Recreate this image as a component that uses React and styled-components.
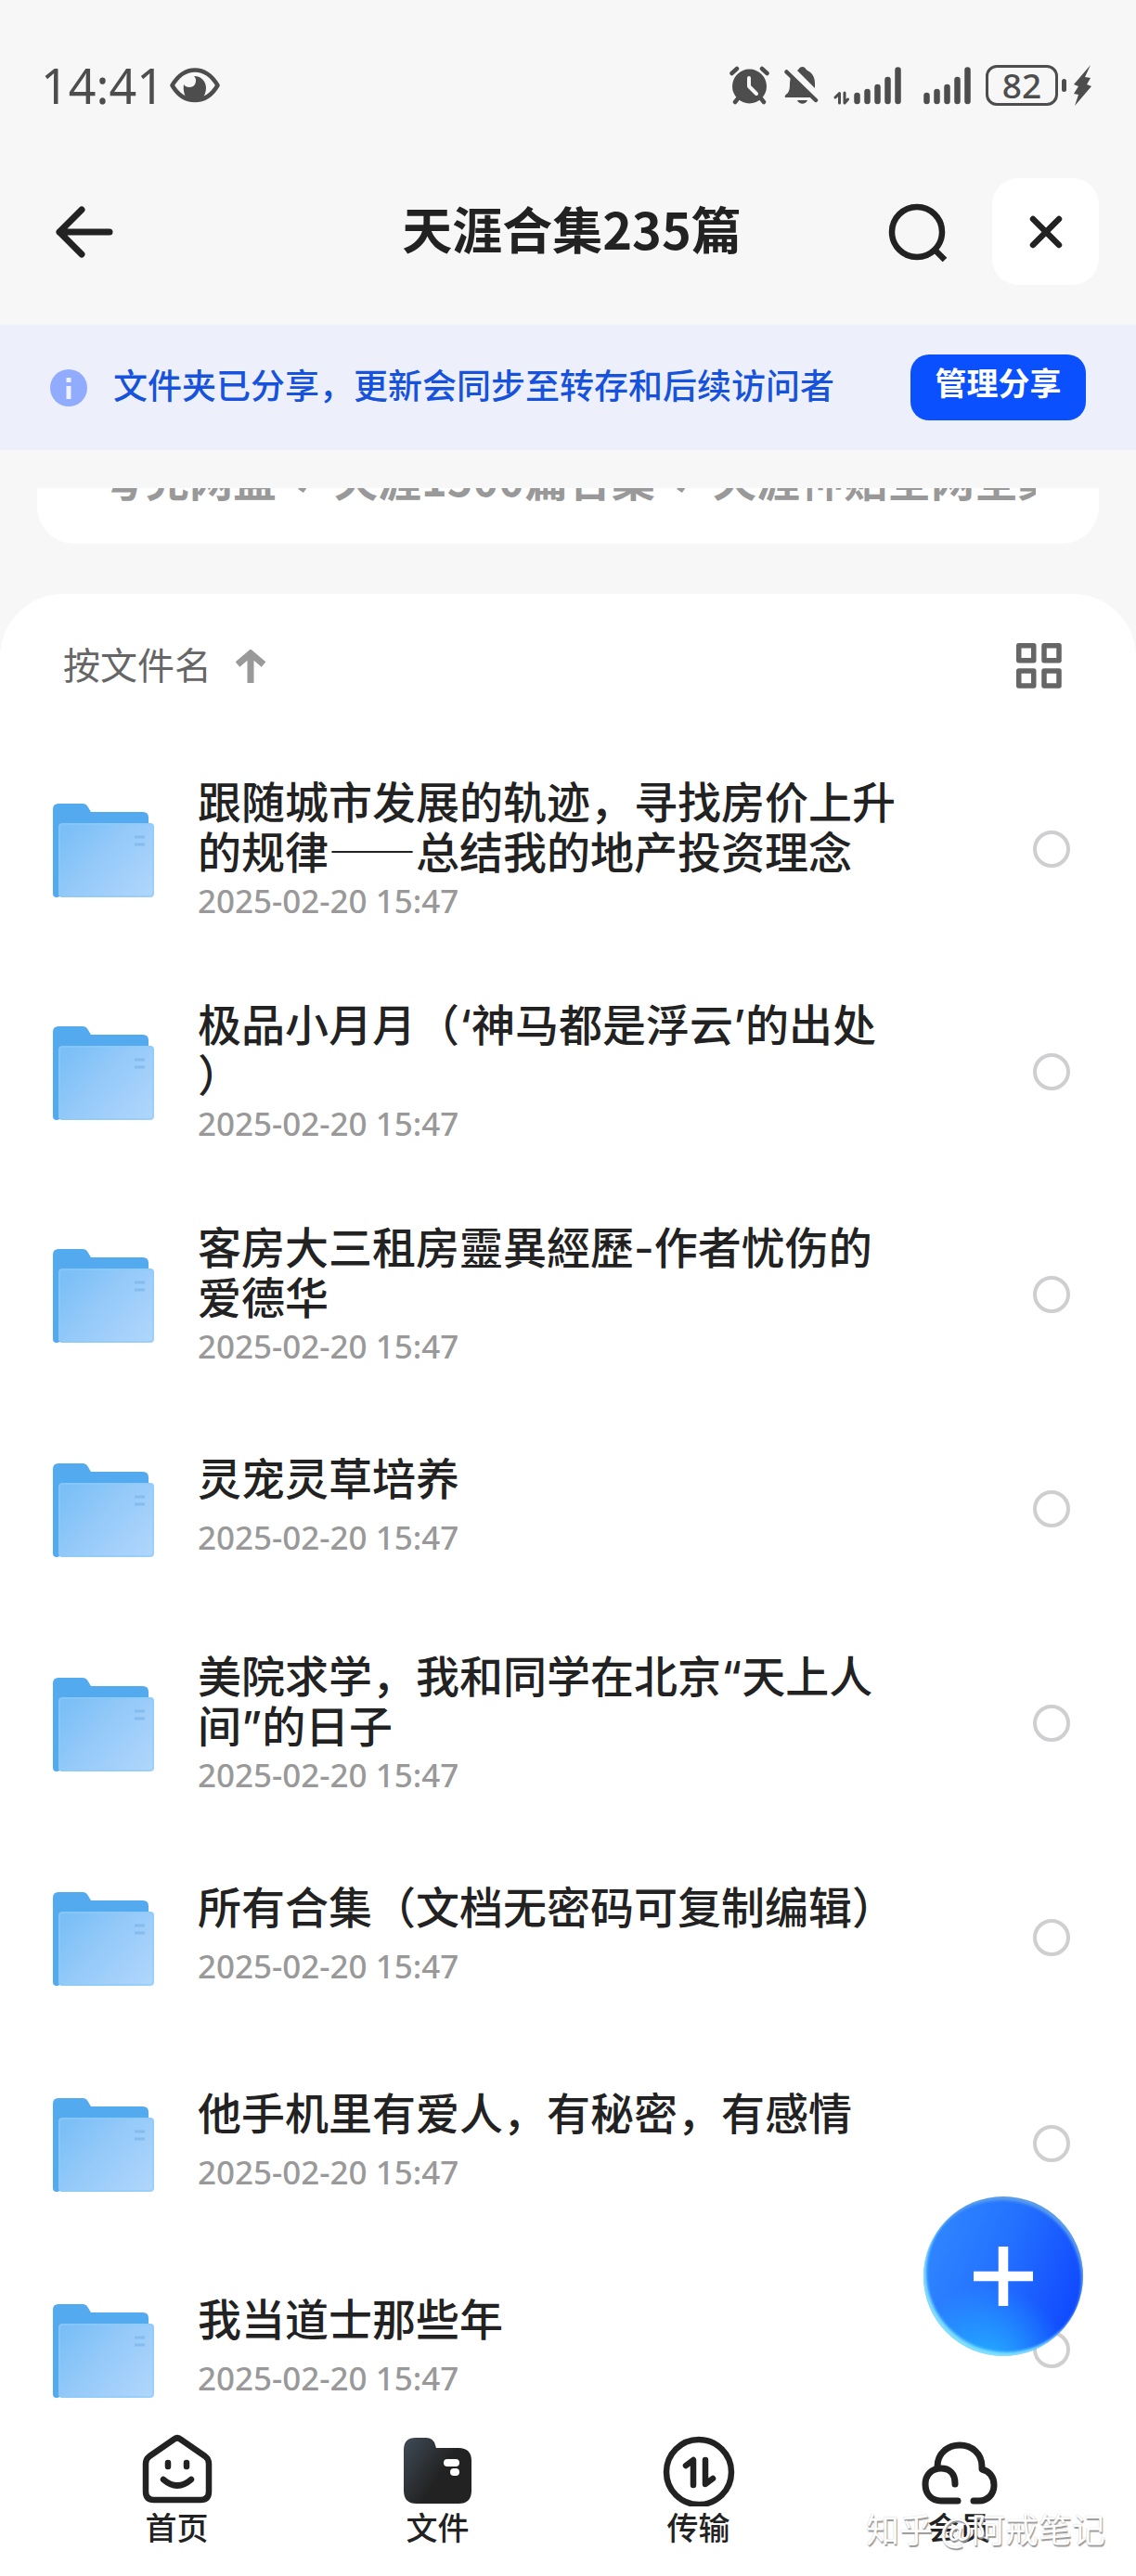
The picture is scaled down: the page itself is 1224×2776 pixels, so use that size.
import { useState } from 'react'
import styled, { createGlobalStyle } from 'styled-components';

const files = [
    { name: '跟随城市发展的轨迹，寻找房价上升的规律——总结我的地产投资理念', long: true },
    { name: '极品小月月（‘神马都是浮云’的出处）', long: true },
    { name: '客房大三租房靈異經歷-作者忧伤的爱德华', long: true },
    { name: '灵宠灵草培养' },
    { name: '美院求学，我和同学在北京“天上人间”的日子', long: true },
    { name: '所有合集（文档无密码可复制编辑）' },
    { name: '他手机里有爱人，有秘密，有感情' },
    { name: '我当道士那些年' },
]

const EyeIcon = () => (
    <svg width="54" height="38" viewBox="0 0 54 38" aria-hidden="true">
        <path d="M2.500 19C9 8 17 2.500 27 2.500S45 8 51.500 19C45 30 37 35 27 35S9 30 2.500 19Z" fill="none" stroke="#4d4d4d" strokeWidth="4.500" strokeLinejoin="round" />
        <path d="M26 9A12.500 13 0 0 1 39 21C39 27 37 30 35 34H19C16 31 14 24 15 18C17 22 25 22 27 18C29 14 28 11 26 9Z" fill="#4d4d4d" />
    </svg>
)

const AlarmIcon = () => (
    <svg width="43" height="42" viewBox="0 0 43 42" aria-hidden="true">
        <g stroke="#4d4d4d" strokeWidth="4.500" strokeLinecap="round">
            <path d="M2.500 8L8 3M40.500 8L35 3M10 34L6 39M33 34L37 39" />
        </g>
        <circle cx="21.500" cy="22" r="18.500" fill="#4d4d4d" />
        <path d="M21 13V22L29 30" fill="none" stroke="#f7f7f7" strokeWidth="4" strokeLinecap="round" strokeLinejoin="round" />
    </svg>
)

const BellOffIcon = () => (
    <svg width="37" height="42" viewBox="0 0 37 42" aria-hidden="true">
        <path d="M14 5C16 4 16 1 19.500 1S23 4 25 5C31 8 33 13 33 19V24Z" fill="#4d4d4d" />
        <path d="M7 11L29 34H1C0 32 2 31 4 29C6 26 6 22 6 18Z" fill="#4d4d4d" />
        <path d="M14 37H25C23 42 16 42 14 37Z" fill="#4d4d4d" />
        <path d="M2.500 6.500L34 37" stroke="#4d4d4d" strokeWidth="4.500" strokeLinecap="round" />
    </svg>
)

const SignalIcon = ({ data }) => (
    <svg width={data ? 73 : 51} height="42" viewBox={data ? '-22 0 73 42' : '0 0 51 42'} aria-hidden="true">
        {data && (
            <path d="M-20 34L-15.500 29.500V40M-10 29V40L-6.500 36" fill="none" stroke="#4d4d4d" strokeWidth="3" strokeLinejoin="round" strokeLinecap="round" />
        )}
        <path d="M3.500 32V38M14.500 28V38M25.500 23V38M36.500 15V38M47.500 4.500V38" stroke="#4d4d4d" strokeWidth="6.500" strokeLinecap="round" />
    </svg>
)

const BoltIcon = () => (
    <svg width="23" height="44" viewBox="0 0 23 44" aria-hidden="true">
        <path d="M20 0L2 21L7 23L2 31L7 32L3 44L21 23L16 21L20 14L14 13Z" fill="#4d4d4d" />
    </svg>
)

const BackIcon = () => (
    <svg width="84" height="64" viewBox="0 0 84 64" aria-hidden="true">
        <path d="M40 8L16 32L40 56M16 32H70" fill="none" stroke="#222" strokeWidth="7" strokeLinecap="round" strokeLinejoin="round" />
    </svg>
)

const SearchIcon = () => (
    <svg width="64" height="64" viewBox="0 0 64 64" aria-hidden="true">
        <circle cx="31" cy="32" r="27" fill="none" stroke="#222" strokeWidth="6.500" />
        <path d="M50 51L61 62" stroke="#222" strokeWidth="6.500" />
    </svg>
)

const CloseIcon = () => (
    <svg width="36" height="36" viewBox="0 0 36 36" aria-hidden="true">
        <path d="M4 4L32 32M32 4L4 32" stroke="#222" strokeWidth="6.500" strokeLinecap="round" />
    </svg>
)

const InfoIcon = () => (
    <svg width="40" height="40" viewBox="0 0 40 40" aria-hidden="true">
        <circle cx="20" cy="20" r="20" fill="#91abff" />
        <path d="M17.500 9H22.500V14H17.500ZM17.500 18H22.500V32H17.500Z" fill="#eff2fd" />
    </svg>
)

const CrumbArrow = () => (
    <svg width="18" height="40" viewBox="0 0 18 40" aria-hidden="true">
        <path d="M4 6L14 20L4 34" fill="none" stroke="#999" strokeWidth="7" />
    </svg>
)

const SortArrow = () => (
    <svg width="34" height="36" viewBox="0 0 34 36" aria-hidden="true">
        <path d="M3 16L17 4L31 16M17 4V36" fill="none" stroke="#999" strokeWidth="7" />
    </svg>
)

const GridIcon = () => (
    <svg width="49" height="49" viewBox="0 0 49 49" aria-hidden="true">
        <g fill="none" stroke="#666" strokeWidth="5.500" strokeLinejoin="round">
            <rect x="2.750" y="2.750" width="16" height="16" />
            <rect x="30" y="2.750" width="16" height="16" />
            <rect x="2.750" y="30" width="16" height="16" />
            <rect x="30" y="30" width="16" height="16" />
        </g>
    </svg>
)

const FolderIcon = () => (
    <svg width="110" height="106" viewBox="0 -4 110 106" aria-hidden="true">
        <defs>
            <linearGradient id="folderFront" x1="0" y1="0.200" x2="1" y2="0.900">
                <stop offset="0" stopColor="#7bbff6" />
                <stop offset="0.450" stopColor="#96caf9" />
                <stop offset="1" stopColor="#afd6fc" />
            </linearGradient>
        </defs>
        <path d="M0 6Q0 0 6 0H32Q36 0 38 4L41 9H97Q103 9 103 15V60H8V97Q8 101 4 101Q0 101 0 97Z" fill="#54aaee" />
        <rect x="6" y="21" width="103" height="80" rx="4" fill="url(#folderFront)" />
        <rect x="7" y="22" width="101" height="78" rx="4" fill="none" stroke="#8ccbf8" strokeWidth="2" opacity="0.600" />
        <path d="M88 36H99M88 44H99" stroke="#86bbee" strokeWidth="3" />
    </svg>
)

const HomeIcon = () => (
    <svg width="78" height="78" viewBox="0 0 78 78" aria-hidden="true">
        <path d="M35 6Q39 2.500 43 6L69 24Q73 27 73 32V62Q73 71 64 71H14Q5 71 5 62V32Q5 27 9 24Z" fill="none" stroke="#222" strokeWidth="6.500" strokeLinejoin="round" />
        <path d="M29 31V35M49 31V35" stroke="#222" strokeWidth="6.500" strokeLinecap="round" />
        <path d="M24 49Q39 62 54 49" fill="none" stroke="#222" strokeWidth="6.500" strokeLinecap="round" />
    </svg>
)

const FilesIcon = () => (
    <svg width="78" height="78" viewBox="0 0 78 78" aria-hidden="true">
        <defs>
            <linearGradient id="filesFill" x1="0" y1="0.200" x2="0.550" y2="0.550">
                <stop offset="0" stopColor="#3b4650" />
                <stop offset="1" stopColor="#222" />
            </linearGradient>
        </defs>
        <path d="M2 17Q2 4 15 4H26Q34 4 36 12L37 15H61Q75 15 75 29V61Q75 75 61 75H16Q2 75 2 61Z" fill="url(#filesFill)" />
        <rect x="45" y="27" width="17" height="8" rx="4" fill="#fff" />
        <rect x="52" y="37" width="10" height="8" rx="4" fill="#fff" />
    </svg>
)

const TransferIcon = () => (
    <svg width="78" height="78" viewBox="0 0 78 78" aria-hidden="true">
        <circle cx="39" cy="41" r="35" fill="none" stroke="#222" strokeWidth="6.500" />
        <path d="M25 34L33 28V55" fill="none" stroke="#222" strokeWidth="6.500" strokeLinecap="round" strokeLinejoin="round" />
        <path d="M46 28V54L54 48" fill="none" stroke="#222" strokeWidth="6.500" strokeLinecap="round" strokeLinejoin="round" />
        <path d="M25 34H33V28ZM46 54V48H54Z" fill="#222" />
    </svg>
)

const CloudIcon = () => (
    <svg width="82" height="78" viewBox="0 0 82 78" aria-hidden="true">
        <g fill="none" stroke="#222" strokeWidth="7" strokeLinecap="round" strokeLinejoin="round">
            <path d="M36 54V53C36 43 30 37 21 37C11 37 4 44 4 54C4 65 11 72 21 72H39" />
            <path d="M17 35C17 21 28 12 41 12S65 21 65 35V38C73 40 78 46 78 55C78 65 71 72 62 72H56" />
        </g>
    </svg>
)

const PlusIcon = () => (
    <svg width="64" height="64" viewBox="0 0 64 64" aria-hidden="true">
        <path d="M32 0V64M0 32H64" stroke="#fff" strokeWidth="10.500" />
    </svg>
)

const tabs = [
    { id: 'home', label: '首页', Icon: HomeIcon },
    { id: 'files', label: '文件', Icon: FilesIcon },
    { id: 'transfer', label: '传输', Icon: TransferIcon },
    { id: 'member', label: '会员', Icon: CloudIcon },
]

// curly quotes are full width in the CJK font, so they get the latin one
const withLatinMarks = (name) => name.split(/([‘’“”-])/).map((part, i) => (
    i % 2 ? <LatinMark key={i}>{part}</LatinMark> : part
))

function FileRow({ name, long }) {
    const [checked, setChecked] = useState(false);
    return (
        <li>
            <Row>
                <FolderIcon />
                <RowText $long={long}>
                    <FileName>{withLatinMarks(name)}</FileName>
                    <FileDate>2025-02-20 15:47</FileDate>
                </RowText>
                <Check type="checkbox" checked={checked} onChange={() => setChecked(!checked)} />
            </Row>
        </li>
    )
}

function App() {
    return (
        <Screen lang="zh-CN">
            <GlobalStyle />
            <StatusBar>
                <Clock>14:41</Clock>
                <EyeIcon />
                <StatusIcons>
                    <AlarmIcon />
                    <BellOffIcon />
                    <SignalIcon data />
                    <Spacer />
                    <SignalIcon />
                    <Battery>82</Battery>
                    <BoltIcon />
                </StatusIcons>
            </StatusBar>
            <Header>
                <IconButton type="button" aria-label="返回"><BackIcon /></IconButton>
                <Title>天涯合集235篇</Title>
                <HeaderActions>
                    <IconButton type="button" aria-label="搜索"><SearchIcon /></IconButton>
                    <CloseButton type="button" aria-label="关闭"><CloseIcon /></CloseButton>
                </HeaderActions>
            </Header>
            <Banner>
                <InfoIcon />
                <BannerText>文件夹已分享，更新会同步至转存和后续访问者</BannerText>
                <ManageButton type="button">管理分享</ManageButton>
            </Banner>
            <CrumbWindow>
                <CrumbCard>
                    <Crumbs>
                        <a href="#root">夸克网盘</a>
                        <CrumbArrow />
                        <a href="#tianya">天涯1500篇合集</a>
                        <CrumbArrow />
                        <a href="#posts">天涯神贴全网全集</a>
                    </Crumbs>
                </CrumbCard>
            </CrumbWindow>
            <Panel>
                <Toolbar>
                    <SortButton type="button"><span>按文件名</span> <SortArrow /></SortButton>
                    <IconButton type="button" aria-label="网格视图"><GridIcon /></IconButton>
                </Toolbar>
                <List>
                    {files.map(file => <FileRow key={file.name} {...file} />)}
                </List>
            </Panel>
            <Footer>
                <AddButton type="button" aria-label="新建"><PlusIcon /></AddButton>
                <TabBar>
                    {tabs.map(({ id, label, Icon }) => (
                        <Tab key={id} href={`#${id}`}>
                            <Icon />
                            {label}
                        </Tab>
                    ))}
                </TabBar>
                <Watermark>知乎 @阿戒笔记</Watermark>
            </Footer>
        </Screen>
    )
}

export default App;

const GlobalStyle = createGlobalStyle`
    * {
        box-sizing: border-box;
    }

    body {
        margin: 0;
        background: #f7f7f7;
        color: #222;
        font-family: "Noto Sans CJK SC", sans-serif;
        text-spacing-trim: space-all;
    }

    button {
        border: none;
        padding: 0;
        background: none;
        font-family: inherit;
        color: inherit;
        cursor: pointer;
    }

    svg {
        display: block;
        flex-shrink: 0;
    }

    a {
        color: inherit;
        text-decoration: none;
    }
`

const Screen = styled.div`
    display: flex;
    flex-direction: column;
    height: 100vh;
    overflow: hidden;
`

const StatusBar = styled.div`
    display: flex;
    align-items: center;
    height: 120px;
    flex-shrink: 0;
    padding: 64px 46px 0 44px;
    color: #4d4d4d;
`

const Clock = styled.span`
    margin-right: 6px;
    font-family: "Noto Sans", sans-serif;
    font-size: 52px;
    line-height: 56px;
`

const StatusIcons = styled.div`
    display: flex;
    align-items: center;
    gap: 16px;
    margin-left: auto;
`

const Spacer = styled.span`
    width: 0;
    margin-right: -8px;
`

const Battery = styled.span`
    position: relative;
    width: 78px;
    height: 44px;
    margin-right: -1px;
    border: 3px solid #4d4d4d;
    border-radius: 12px;
    font-family: "Noto Sans", sans-serif;
    font-size: 37px;
    font-weight: 500;
    line-height: 38px;
    text-align: center;

    &::after {
        content: '';
        position: absolute;
        top: 12px;
        right: -12px;
        width: 5px;
        height: 14px;
        border-radius: 3px;
        background: #4d4d4d;
    }
`

const Header = styled.header`
    display: grid;
    grid-template-columns: 1fr auto 1fr;
    align-items: center;
    flex-shrink: 0;
    padding: 72px 40px 43px 48px;
`

const IconButton = styled.button`
    justify-self: start;
`

const Title = styled.h1`
    margin: 0;
    padding-bottom: 8px;
    font-size: 54px;
    font-weight: 700;
    line-height: 72px;
`

const HeaderActions = styled.div`
    display: flex;
    align-items: center;
    justify-content: flex-end;
    gap: 48px;
`

const CloseButton = styled.button`
    display: flex;
    align-items: center;
    justify-content: center;
    width: 115px;
    height: 115px;
    border-radius: 28px;
    background: #fff;
`

const Banner = styled.div`
    display: flex;
    align-items: center;
    gap: 28px;
    flex-shrink: 0;
    height: 135px;
    padding: 0 54px;
    background: #edf0fa;
`

const BannerText = styled.p`
    flex: 1;
    margin: 0;
    padding-bottom: 8px;
    color: #1652dc;
    font-size: 37px;
    font-weight: 500;
    line-height: 48px;
    white-space: nowrap;
`

const ManageButton = styled.button`
    width: 189px;
    height: 71px;
    padding-bottom: 12px;
    border-radius: 20px;
    background: #0a50ff;
    color: #fff;
    font-size: 34px;
    font-weight: 700;
    line-height: 48px;
`

/* the breadcrumb card is half scrolled away under the banner */
const CrumbWindow = styled.div`
    display: flex;
    align-items: flex-end;
    flex-shrink: 0;
    height: 60px;
    margin: 41px 40px 54px;
    overflow: hidden;
`

const CrumbCard = styled.nav`
    flex: 1;
    min-width: 0;
    padding: 39px 68px 41px;
    border-radius: 40px;
    background: #fff;
`

const Crumbs = styled.div`
    display: flex;
    align-items: center;
    gap: 22px;
    overflow: hidden;
    padding-left: 2px;
    color: #999;
    font-size: 47px;
    font-weight: 700;
    line-height: 60px;
    white-space: nowrap;
`

const Panel = styled.main`
    flex: 1;
    min-height: 0;
    overflow: hidden;
    border-radius: 68px 68px 0 0;
    background: #fff;
`

const Toolbar = styled.div`
    display: flex;
    align-items: center;
    justify-content: space-between;
    height: 155px;
    padding: 0 80px 0 68px;
`

const SortButton = styled.button`
    display: flex;
    align-items: center;
    gap: 25px;
    color: #666;
    font-size: 40px;
    line-height: 54px;

    span {
        padding-bottom: 6px;
    }
`

const List = styled.ul`
    margin: 0;
    padding: 0;
    list-style: none;
`

const Row = styled.label`
    display: flex;
    align-items: center;
    min-height: 222px;
    padding: 40px 71px 40px 57px;
`

const RowText = styled.div`
    display: flex;
    flex-direction: column;
    gap: ${props => props.$long ? 4 : 15}px;
    flex: 1;
    margin: 0 140px 0 46px;
    padding-bottom: ${props => props.$long ? 0 : 8}px;
`

const FileName = styled.div`
    font-size: 47px;
    font-weight: 500;
    line-height: 54px;
    line-break: anywhere;
`

const LatinMark = styled.span`
    font-family: Inter, sans-serif;
    line-height: 1;
`

const FileDate = styled.div`
    color: #999;
    font-family: "Noto Sans", sans-serif;
    font-size: 35px;
    font-weight: 500;
    line-height: 48px;
`

const Check = styled.input`
    appearance: none;
    flex-shrink: 0;
    width: 40px;
    height: 40px;
    margin: 0;
    border: 4px solid #cfcfd1;
    border-radius: 50%;

    &:checked {
        border-color: #0a50ff;
        background: #0a50ff;
    }
`

const Footer = styled.footer`
    position: relative;
    flex-shrink: 0;
    background: #fff;
`

const TabBar = styled.nav`
    display: grid;
    grid-template-columns: repeat(4, 1fr);
    padding: 35px 50px 31px;
`

const Tab = styled.a`
    display: flex;
    flex-direction: column;
    align-items: center;
    font-size: 34px;
    font-weight: 500;
    line-height: 44px;
`

const AddButton = styled.button`
    position: absolute;
    right: 57px;
    bottom: 237px;
    display: flex;
    align-items: center;
    justify-content: center;
    width: 172px;
    height: 172px;
    border-radius: 50%;
    background:
        radial-gradient(circle at 40% 108%, #25b4ff 0%, rgba(37, 150, 255, 0) 42%),
        linear-gradient(110deg, #2f86ff 10%, #2370ff 48%, #1048ff 90%);
    box-shadow: inset 3px -4px 3px #7fe0ff, inset -2px 4px 3px #5a9dec;
`

const Watermark = styled.span`
    position: absolute;
    right: 33px;
    bottom: 28px;
    color: #fff;
    font-size: 36px;
    line-height: 48px;
    text-shadow: 1px 2px 1px #999, 0 0 1px #bbb;
`
